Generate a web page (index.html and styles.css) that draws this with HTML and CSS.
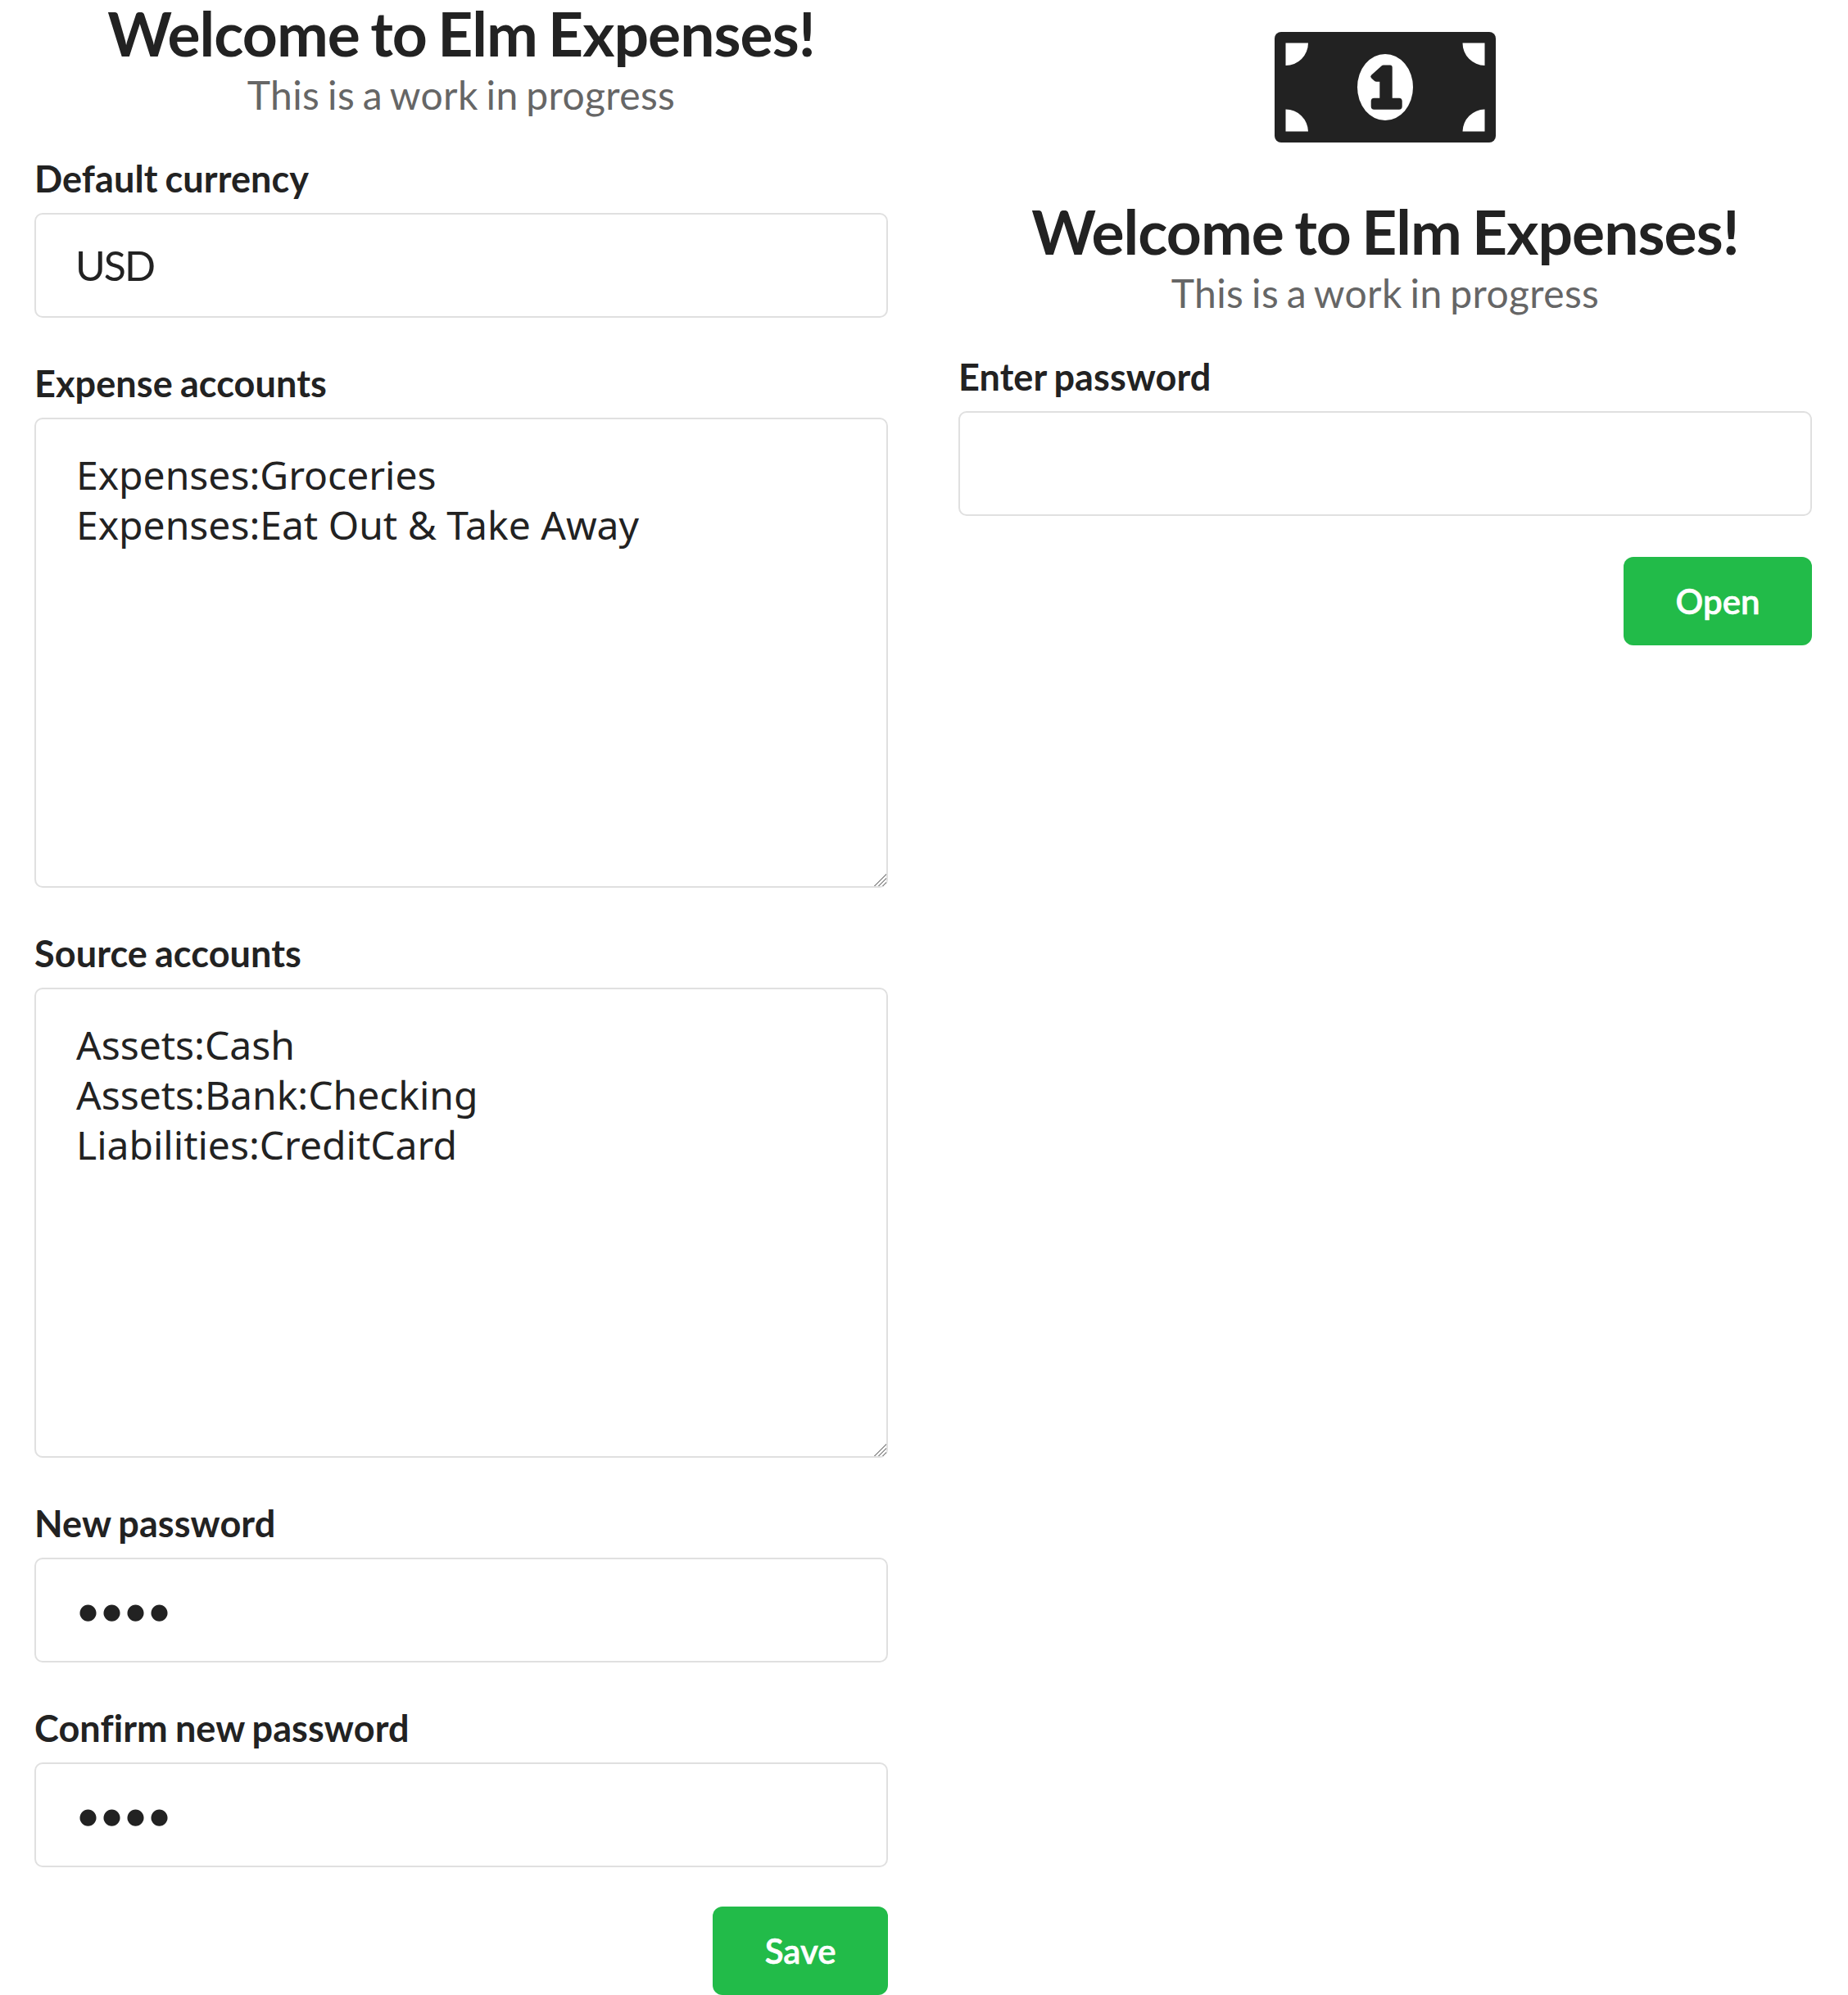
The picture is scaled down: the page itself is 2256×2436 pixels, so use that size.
FILE: index.html
```html
<!DOCTYPE html>
<html lang="en">
<head>
  <meta charset="UTF-8">
  <meta name="viewport" content="width=device-width, initial-scale=1.0">
  <title>Elm Expenses</title>
  <link rel="stylesheet" href="styles.css">
</head>
<body>
  <div class="page">
    <form class="panel panel-setup">
      <div class="header">
        <h1 class="title">Welcome to Elm Expenses!</h1>
        <p class="subtitle">This is a work in progress</p>
      </div>
      <label class="field">
        <span class="field-label">Default currency</span>
        <input class="field-input field-currency" type="text" value="USD">
      </label>
      <label class="field">
        <span class="field-label">Expense accounts</span>
        <textarea class="field-input field-area" spellcheck="false">Expenses:Groceries
Expenses:Eat Out &amp; Take Away</textarea>
      </label>
      <label class="field">
        <span class="field-label">Source accounts</span>
        <textarea class="field-input field-area" spellcheck="false">Assets:Cash
Assets:Bank:Checking
Liabilities:CreditCard</textarea>
      </label>
      <label class="field">
        <span class="field-label">New password</span>
        <input class="field-input field-password" type="password" value="1234">
      </label>
      <label class="field field-last">
        <span class="field-label">Confirm new password</span>
        <input class="field-input field-password" type="password" value="1234">
      </label>
      <div class="actions">
        <button class="button" type="button">Save</button>
      </div>
    </form>

    <form class="panel panel-open">
      <svg class="logo" viewBox="0 0 270 135" width="270" height="135">
        <rect width="270" height="135" rx="8" fill="#222"/>
        <path fill="#fff" d="M13.5 13.5H41A27.5 27.5 0 0 1 13.5 41ZM256.5 13.5H229.5A27.5 27.5 0 0 0 256.5 41ZM13.5 121.5H41A27.5 27.5 0 0 0 13.5 94.500ZM256.500 121.500H229.500A27.500 27.500 0 0 1 256.500 94.500Z"/>
        <ellipse cx="135" cy="67.500" rx="34" ry="40.500" fill="#fff"/>
        <path fill="#222" d="M133 40.500H141Q143.700 40.500 143.700 43.500V80.700H152Q155.700 80.700 155.700 84.500V91Q155.700 94.700 152 94.700H121.500Q117.700 94.700 117.700 91V84.500Q117.700 80.700 121.500 80.700H128.300V60.800H124.500Q122.800 60.800 121.800 59.800L118 56.300Q116.300 54.500 118 52.800L130.500 41.500Q131.500 40.500 133 40.500Z"/>
      </svg>
      <div class="header">
        <h1 class="title">Welcome to Elm Expenses!</h1>
        <p class="subtitle">This is a work in progress</p>
      </div>
      <label class="field">
        <span class="field-label">Enter password</span>
        <input class="field-input field-password" type="password">
      </label>
      <div class="actions">
        <button class="button" type="button">Open</button>
      </div>
    </form>
  </div>
</body>
</html>
```

FILE: styles.css
```css
* {
  box-sizing: border-box;
}

html, body {
  margin: 0;
  padding: 0;
  background: #fff;
}

body {
  height: 2436px;
  overflow: hidden;
  font-family: Lato, "Liberation Sans", sans-serif;
  color: #222;
}

.page {
  display: flex;
  gap: 86px;
  padding: 0 44px 0 42px;
}

.panel {
  flex: 1 1 0;
  min-width: 0;
}

.panel-open {
  display: flex;
  flex-direction: column;
  padding-top: 39px;
}

.logo {
  display: block;
  align-self: center;
  margin-bottom: 68px;
}

.header {
  text-align: center;
  margin-bottom: 36.5px;
}

.title {
  margin: 0;
  font-size: 75px;
  line-height: 80px;
  font-weight: 700;
  letter-spacing: -.95px;
  word-spacing: -4px;
}

.subtitle {
  margin: 0;
  font-size: 48px;
  line-height: 71px;
  letter-spacing: .4px;
  word-spacing: -3px;
  color: #666;
}

.field {
  display: block;
  margin-bottom: 49.5px;
}

.field-last {
  margin-bottom: 48px;
}

.field-label {
  display: block;
  margin-bottom: 12px;
  font-size: 45px;
  line-height: 60px;
  font-weight: 700;
  letter-spacing: .1px;
  word-spacing: -2px;
}

.field-input {
  display: block;
  width: 100%;
  height: 128.500px;
  padding: 0 49px;
  border: 2px solid #e0e0e0;
  border-radius: 10px;
  background: #fff;
  color: #222;
  font-family: Lato, "Liberation Sans", sans-serif;
  font-size: 50px;
  outline: none;
}

.field-currency {
  padding-left: 48px;
  letter-spacing: -2px;
}

.field-password {
  -webkit-text-stroke: 1.500px #222;
}

.field-area {
  height: 574.500px;
  padding: 37px 49px;
  font-family: "Noto Sans", sans-serif;
  font-size: 48px;
  line-height: 61px;
  resize: vertical;
}

.field-area::-webkit-resizer {
  background:
    linear-gradient(135deg, #fff 50%, transparent 50%),
    repeating-linear-gradient(135deg, #999 0, #999 1.500px, #fff 1.500px, #fff 3.500px);
}

.actions {
  display: flex;
  justify-content: flex-end;
}

.button {
  height: 108px;
  padding: 0 63.500px;
  border: 0;
  border-radius: 12px;
  background: #22bb49;
  color: #fff;
  font-family: Lato, "Liberation Sans", sans-serif;
  font-size: 42px;
  font-weight: 600;
  -webkit-text-stroke: .6px #fff;
}
```
